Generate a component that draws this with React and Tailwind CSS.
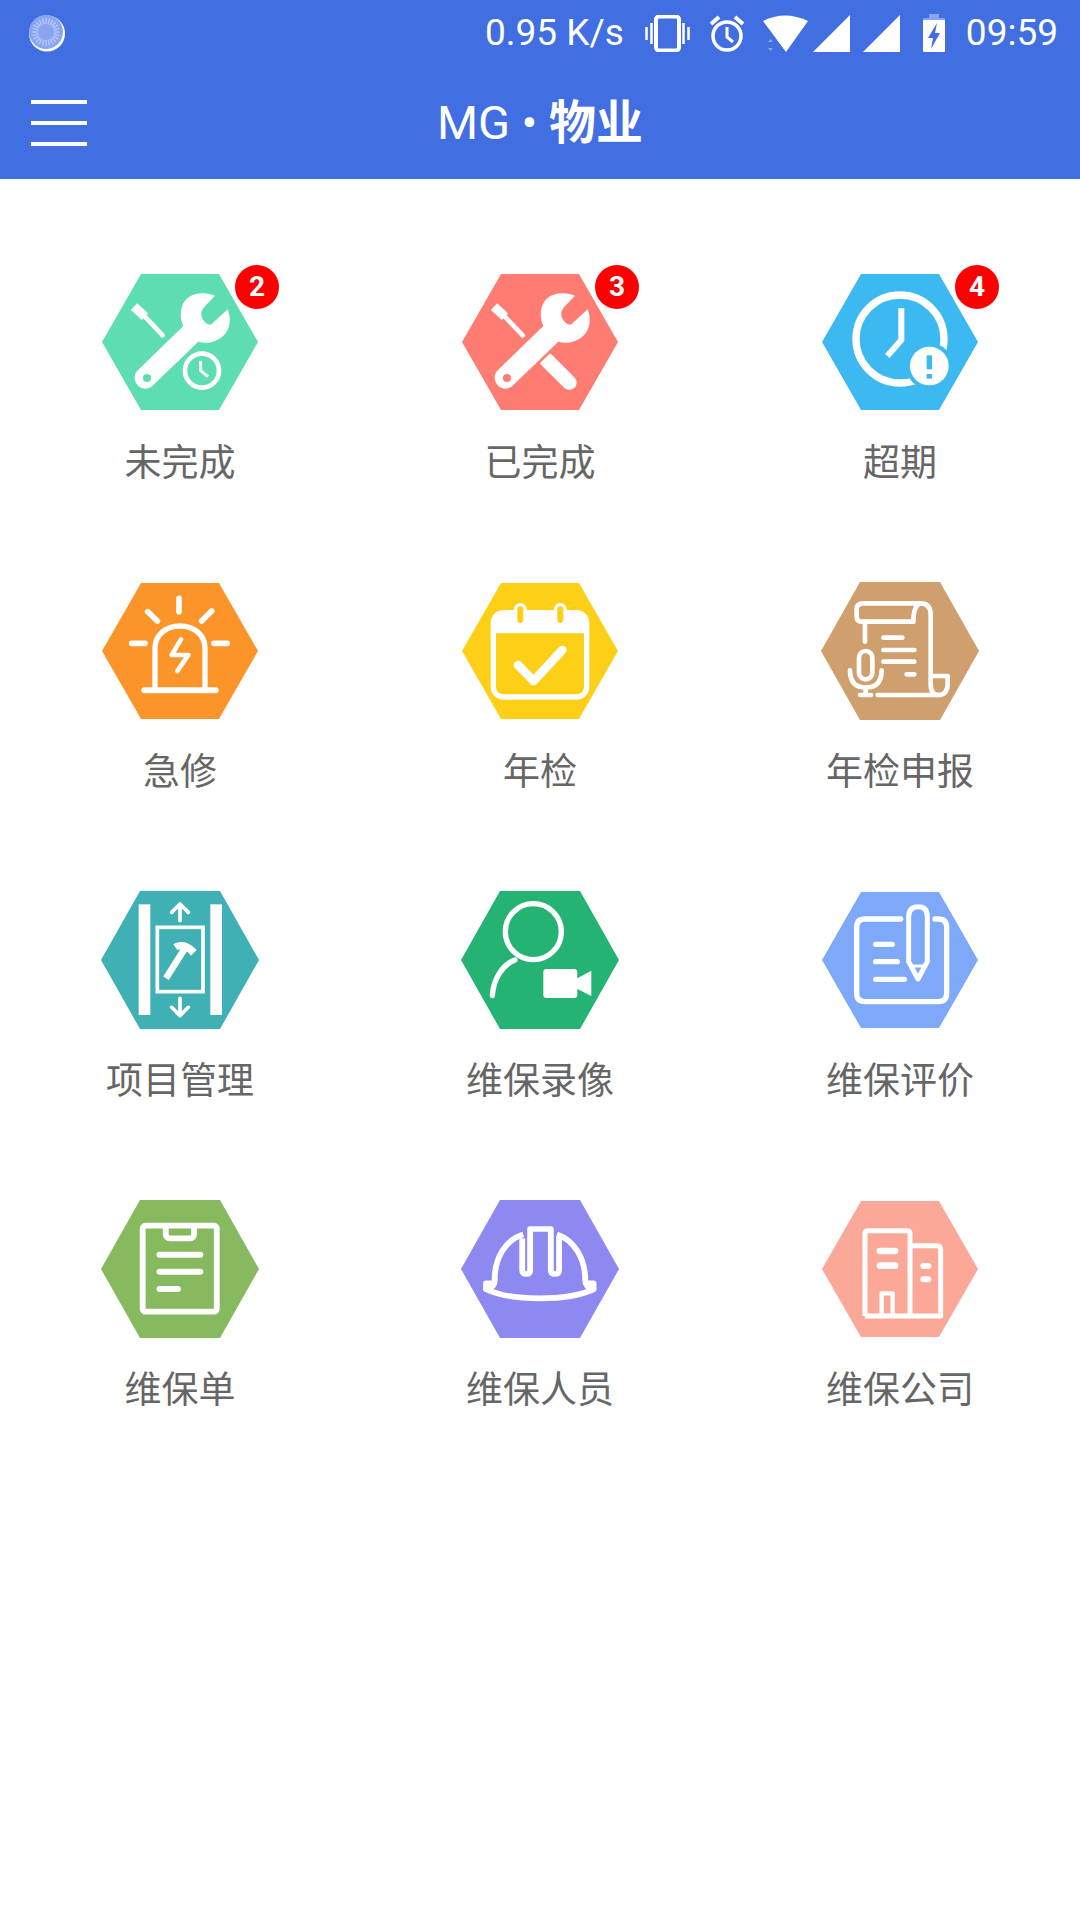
const HEX = '2,70 41,2 119,2 158,70 119,138 41,138';
const HEX_BIG = '1,70 40,1 120,1 159,70 120,139 40,139';
const WRENCH = 'M405 137C385 128 345 125 322 145C300 165 297 200 310 228L172 362C160 375 162 395 175 408C190 420 208 418 220 405L355 275C385 285 420 272 438 248C452 228 452 200 443 178L395 222C385 228 370 215 365 200C362 190 365 180 372 172Z';

// icon drawings are traced in 3x coordinates, so each group scales back down
function Wrench({ color }) {
    return (
        <>
            <path fill="#fff" d={WRENCH} />
            <circle cx="201" cy="384" r="12" fill={color} />
            <path stroke="#fff" strokeWidth="28" fill="none" d="M162 170L195 200" />
            <path stroke="#fff" strokeWidth="14" fill="none" strokeLinecap="round" d="M195 200L248 256" />
        </>
    );
}

function Pending({ color }) {
    return (
        <g transform="translate(-20 -22) scale(0.3333)">
            <Wrench color={color} />
            <circle cx="366" cy="362" r="51" fill={color} stroke="#fff" strokeWidth="14" />
            <path d="M362 333V362L384 380" fill="none" stroke="#fff" strokeWidth="9" />
        </g>
    );
}

function Done({ color }) {
    return (
        <g transform="translate(-20 -22) scale(0.3333)">
            <path d="M320 330L388 398" stroke="#fff" strokeWidth="44" strokeLinecap="round" fill="none" />
            <path d={WRENCH} fill="none" stroke={color} strokeWidth="16" />
            <Wrench color={color} />
        </g>
    );
}

function Overdue({ color }) {
    return (
        <g transform="translate(-20 -22) scale(0.3333)">
            <circle cx="300" cy="267" r="132" fill="none" stroke="#fff" strokeWidth="22" />
            <path d="M304 175V270L262 318" fill="none" stroke="#fff" strokeWidth="18" />
            <circle cx="388" cy="348" r="64" fill="#fff" stroke={color} strokeWidth="12" />
            <path d="M388 316V358" stroke={color} strokeWidth="16" />
            <path d="M388 372V386" stroke={color} strokeWidth="16" />
        </g>
    );
}

function Siren() {
    return (
        <g transform="translate(-20 -10) scale(0.3333)" fill="none" stroke="#fff" strokeWidth="16" strokeLinecap="round" strokeLinejoin="round">
            <path d="M225 352V232C225 190 260 165 300 165C340 165 375 190 375 232V352" />
            <path d="M193 358H407" strokeWidth="18" />
            <path d="M303 205L275 252H325L292 300" strokeWidth="14" />
            <path d="M297 82V122M203 122L232 150M395 120L365 150M155 217H195M402 217H442" strokeWidth="17" />
        </g>
    );
}

function CalendarCheck({ color }) {
    return (
        <g transform="translate(-15 -10) scale(0.3333)" fill="none" stroke="#fff" strokeLinecap="round" strokeLinejoin="round">
            <rect x="145" y="125" width="280" height="253" rx="30" strokeWidth="16" />
            <path d="M148 185V150Q148 125 178 125H392Q422 125 422 150V185Z" fill="#fff" strokeWidth="4" />
            <rect x="212" y="101" width="28" height="60" rx="14" fill={color} strokeWidth="10" />
            <rect x="332" y="101" width="28" height="60" rx="14" fill={color} strokeWidth="10" />
            <path d="M219 282L266 330L352 237" strokeWidth="26" />
        </g>
    );
}

function ScrollMic() {
    return (
        <g transform="translate(-15 -10) scale(0.3333)" fill="none" stroke="#fff" strokeWidth="14" strokeLinecap="round" strokeLinejoin="round">
            <path d="M325 152H170Q155 152 155 137V115Q155 97 175 97H345Q377 97 377 130V340Q378 372 400 372Q426 372 428 340V315H377" />
            <path d="M345 97Q325 105 325 152" />
            <path d="M180 152V212" />
            <path d="M218 372H400" />
            <path d="M235 200H292M235 237H328M235 272H328M305 310H328" />
            <rect x="162" y="240" width="40" height="85" rx="20" />
            <path d="M135 298Q135 350 182 350Q230 350 230 298M182 350V372M165 372H198" />
        </g>
    );
}

function Lift() {
    return (
        <g transform="translate(-10 -10) scale(0.3333)" fill="none" stroke="#fff" strokeWidth="11" strokeLinecap="round" strokeLinejoin="round">
            <rect x="146" y="73" width="35" height="332" fill="#fff" stroke="none" />
            <rect x="361" y="73" width="35" height="332" fill="#fff" stroke="none" />
            <path d="M270 122V75M245 97L270 72L295 97" />
            <path d="M270 355V405M245 382L270 407L295 382" />
            <rect x="202" y="142" width="137" height="193" strokeLinejoin="miter" />
            <path d="M228 295L285 205" strokeWidth="20" strokeLinecap="butt" />
            <path d="M250 193C275 178 300 188 320 210L303 227C292 212 280 206 262 210Z" fill="#fff" stroke="none" />
        </g>
    );
}

function PersonVideo() {
    return (
        <g transform="translate(-10 -10) scale(0.3333)" fill="none" stroke="#fff" strokeWidth="16" strokeLinecap="round">
            <circle cx="250" cy="155" r="84" />
            <path d="M127 347C130 300 155 255 195 240" />
            <rect x="280" y="267" width="102" height="87" rx="10" fill="#fff" stroke="none" />
            <path d="M372 300L424 272V348L372 322Z" fill="#fff" stroke="none" />
        </g>
    );
}

function NotePen() {
    return (
        <g transform="translate(-10 -10) scale(0.3333)" fill="none" stroke="#fff" strokeWidth="16" strokeLinecap="round" strokeLinejoin="round">
            <path d="M272 117H165Q140 117 140 142V340Q140 365 165 365H385Q410 365 410 340V142Q410 117 385 117H375" />
            <path d="M197 193H247M197 245H262M197 298H283" />
            <path d="M296 245V110Q296 80 325 80Q352 80 352 110V245L324 297Z" strokeWidth="15" />
            <path d="M305 258H345" strokeWidth="9" />
        </g>
    );
}

function Clipboard() {
    return (
        <g transform="translate(-10 -9) scale(0.3444 0.3333)" fill="none" stroke="#fff" strokeWidth="17" strokeLinecap="round" strokeLinejoin="round">
            <rect x="153" y="107" width="215" height="258" rx="8" />
            <path d="M220 110V132Q220 145 234 145H289Q302 145 302 132V110" />
            <path d="M202 194H320M202 245H320M202 297H255" strokeWidth="18" />
        </g>
    );
}

function Helmet() {
    return (
        <g transform="translate(-370 -9) scale(0.3444 0.3333)" fill="none" stroke="#fff" strokeWidth="17" strokeLinejoin="round">
            <path d="M1258 133C1205 150 1175 205 1175 270Q1176 292 1150 298Q1205 325 1305 325Q1405 325 1462 298Q1438 292 1438 270C1438 205 1405 150 1356 133" />
            <path d="M1175 280H1150V298M1438 280H1462V298" />
            <path d="M1255 145V240Q1255 252 1267 252Q1278 252 1278 240V117H1338V240Q1338 252 1350 252Q1362 252 1362 240V140" />
        </g>
    );
}

function Building() {
    return (
        <g transform="translate(-10 -9) scale(0.3333)" fill="none" stroke="#fff" strokeWidth="15" strokeLinejoin="round">
            <path d="M165 378V130Q165 122 175 122H290Q300 122 300 130V378" />
            <path d="M300 167H380Q392 167 392 178V378H165" />
            <path d="M210 183H255M210 227H255" strokeWidth="20" strokeLinecap="round" />
            <path d="M340 228H355M340 268H355" strokeWidth="18" strokeLinecap="round" />
            <path d="M215 378V310H248V378" strokeWidth="13" />
        </g>
    );
}

const items = [
    { label: '未完成', color: '#5EDDB2', badge: 2, Icon: Pending },
    { label: '已完成', color: '#FF7C73', badge: 3, Icon: Done },
    { label: '超期', color: '#3DB9F2', badge: 4, Icon: Overdue },
    { label: '急修', color: '#FB952A', Icon: Siren },
    { label: '年检', color: '#FDCF17', Icon: CalendarCheck },
    { label: '年检申报', color: '#CF9F6D', big: true, Icon: ScrollMic },
    { label: '项目管理', color: '#3FB1B4', big: true, Icon: Lift },
    { label: '维保录像', color: '#25B373', big: true, Icon: PersonVideo },
    { label: '维保评价', color: '#7DA9F8', Icon: NotePen },
    { label: '维保单', color: '#87B95F', big: true, Icon: Clipboard },
    { label: '维保人员', color: '#8D89F1', big: true, Icon: Helmet },
    { label: '维保公司', color: '#FBA898', Icon: Building },
];

function MenuItem({ label, color, big, badge, Icon }) {
    return (
        <div className="flex flex-col items-center">
            <div className="relative w-[160px] h-[140px]">
                <svg width="160" height="140" viewBox="0 0 160 140">
                    <polygon points={big ? HEX_BIG : HEX} fill={color} />
                    <Icon color={color} />
                </svg>
                {badge && (
                    <span className="absolute left-[135px] top-[-7px] w-[44px] h-[44px] rounded-full bg-[#f00] text-white text-[28px] font-bold leading-[44px] text-center font-['Roboto',sans-serif]">
                        {badge}
                    </span>
                )}
            </div>
            <span className="mt-[24px] text-[37px] leading-[48px] text-[#666]">{label}</span>
        </div>
    );
}

function StatusBar() {
    return (
        <div className="h-[66px] flex items-center justify-between pl-[29px] pr-[22px] text-[37px] text-white font-['Roboto',sans-serif]">
            <svg width="36" height="37" viewBox="0 0 36 37">
                <circle cx="18" cy="18.5" r="18" fill="#fff" />
                <circle cx="17" cy="17" r="17" fill="#8AA5F0" />
                {Array.from({ length: 24 }).map((_, i) => (
                    <line key={i} x1="17" y1="3" x2="17" y2="9" stroke="#B5C6F5" strokeWidth="1.5" transform={`rotate(${i * 15} 17 17)`} />
                ))}
            </svg>
            <div className="flex items-center">
                <span>0.95 K/s</span>
                <svg className="ml-[21px]" width="45" height="37" viewBox="0 0 45 37" fill="none" stroke="#fff">
                    <rect x="11" y="1.5" width="23" height="34" rx="3" strokeWidth="4" />
                    <path d="M1.5 12V25M6.5 8V29M38.5 8V29M43.5 12V25" strokeWidth="2.5" />
                </svg>
                <svg className="ml-[18px]" width="38" height="37" viewBox="0 0 38 37" fill="none" stroke="#fff" strokeWidth="3.5">
                    <circle cx="19" cy="21" r="14" />
                    <path d="M3 9L11 2M35 9L27 2" strokeWidth="4" />
                    <path d="M19 12V22L25 27" strokeWidth="3" />
                </svg>
                <svg className="ml-[17px]" width="45" height="37" viewBox="0 0 45 37">
                    <path d="M0 6Q22 -5 45 6L23 37Z" fill="#fff" />
                    <path d="M5 27L7.5 24L10 27ZM5 33L7.5 36L10 33Z" fill="#8AA5F0" />
                </svg>
                <svg className="ml-[5px]" width="37" height="37" viewBox="0 0 37 37">
                    <polygon points="37,0 37,37 0,37" fill="#fff" />
                </svg>
                <svg className="ml-[13px]" width="37" height="37" viewBox="0 0 37 37">
                    <polygon points="37,0 37,37 0,37" fill="#fff" />
                </svg>
                <svg className="ml-[23px]" width="22" height="38" viewBox="0 0 22 38">
                    <rect x="6" y="0" width="10" height="4" fill="#8AA5F0" />
                    <rect x="0" y="4" width="22" height="34" rx="1" fill="#8AA5F0" />
                    <rect x="0" y="6" width="22" height="32" rx="1" fill="#fff" />
                    <path d="M14 9L5 24H10L8 35L17 19H12Z" fill="#416EE0" />
                </svg>
                <span className="ml-[21px]">09:59</span>
            </div>
        </div>
    );
}

export default function App() {
    return (
        <div className="min-h-screen bg-white font-['Noto_Sans_CJK_SC',sans-serif]">
            <header className="bg-[#416EE0] h-[179px]">
                <StatusBar />
                <div className="h-[113px] flex items-center px-[31px]">
                    <div className="w-[56px] flex flex-col gap-[17px]">
                        <span className="block h-[4px] bg-white" />
                        <span className="block h-[4px] bg-white" />
                        <span className="block h-[4px] bg-white" />
                    </div>
                    <h1 className="flex-1 text-center text-[47px] leading-none text-white font-['Roboto','Noto_Sans_CJK_SC',sans-serif]">
                        MG • <span className="font-bold">物业</span>
                    </h1>
                    <div className="w-[56px]" />
                </div>
            </header>
            <main className="grid grid-cols-3 auto-rows-[309px] pt-[93px]">
                {items.map((item) => (
                    <MenuItem key={item.label} {...item} />
                ))}
            </main>
        </div>
    );
}
